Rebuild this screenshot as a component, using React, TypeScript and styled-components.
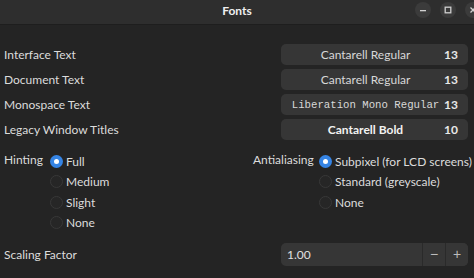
import React, { useState } from "react";
import styled, { createGlobalStyle } from "styled-components";

const GlobalStyle = createGlobalStyle`
  html, body {
    margin: 0;
    padding: 0;
    background: #242424;
  }
  body {
    font-family: Lato, "Noto Sans", sans-serif;
    color: #dededf;
  }
`;

const Window = styled.div`
  width: 474px;
  height: 278px;
  overflow: hidden;
  background: #242424;
`;

const HeaderBar = styled.div`
  position: relative;
  height: 24px;
  background: #2e2e2e;
  border-bottom: 1px solid #1e1e1e;
  display: flex;
  align-items: center;
  justify-content: center;
`;

const Title = styled.div`
  font-size: 12px;
  font-weight: 700;
  color: #f0f0f0;
  margin-top: -4px;
`;

const Controls = styled.div`
  position: absolute;
  top: 2px;
  left: 415px;
  display: flex;
  gap: 9px;
`;

const ControlButton = styled.div`
  width: 16px;
  height: 16px;
  border-radius: 50%;
  background: #3b3b3b;
  display: flex;
  align-items: center;
  justify-content: center;
  flex-shrink: 0;
`;

const Content = styled.div`
  padding: 19px 6px 0 4px;
`;

const FontRows = styled.div`
  display: flex;
  flex-direction: column;
  gap: 4px;
`;

const Row = styled.div`
  display: flex;
  align-items: center;
  justify-content: space-between;
  height: 21px;
`;

const Label = styled.div`
  font-size: 12px;
  color: #dcdcdc;
  white-space: nowrap;
`;

const FontButton = styled.button`
  width: 187px;
  height: 21px;
  border: none;
  border-radius: 5px;
  background: #363636;
  display: flex;
  align-items: center;
  padding: 0 10px 0 6px;
  font-family: Lato, "Noto Sans", sans-serif;
  color: #dcdcdc;
`;

const FontName = styled.span<{ mono?: boolean; bold?: boolean }>`
  flex: 1;
  text-align: center;
  font-family: ${({ mono }) =>
    mono ? `"Liberation Mono", monospace` : `Lato, "Noto Sans", sans-serif`};
  font-size: ${({ mono }) => (mono ? "10.7px" : "12px")};
  font-weight: ${({ bold }) => (bold ? 700 : 400)};
  white-space: nowrap;
  color: ${({ bold }) => (bold ? "#f2f2f2" : "#d8d8d8")};
`;

const FontSize = styled.span`
  font-size: 12px;
  font-weight: 700;
  width: 14px;
  text-align: right;
  color: #e8e8e8;
`;

const Options = styled.div`
  display: flex;
  margin-top: 11px;
`;

const OptionGroup = styled.div<{ width: number; labelWidth: number }>`
  display: grid;
  grid-template-columns: ${({ labelWidth }) => labelWidth}px 1fr;
  width: ${({ width }) => width}px;
  align-items: start;
`;

const GroupLabel = styled(Label)`
  margin-top: 1px;
`;

const RadioList = styled.div`
  display: flex;
  flex-direction: column;
  gap: 6.5px;
  padding-top: 3px;
`;

const RadioRow = styled.label`
  display: flex;
  align-items: center;
  gap: 3px;
  font-size: 12px;
  color: #dcdcdc;
  height: 14px;
  white-space: nowrap;
  cursor: pointer;
`;

const RadioDot = styled.span<{ checked: boolean }>`
  width: 13px;
  height: 13px;
  border-radius: 50%;
  box-sizing: border-box;
  flex-shrink: 0;
  background: ${({ checked }) => (checked ? "#3584e4" : "#262626")};
  border: ${({ checked }) => (checked ? "none" : "1.5px solid #383838")};
  display: flex;
  align-items: center;
  justify-content: center;
  &::after {
    content: "";
    display: ${({ checked }) => (checked ? "block" : "none")};
    width: 5px;
    height: 5px;
    border-radius: 50%;
    background: #ffffff;
  }
`;

const ScaleRow = styled(Row)`
  margin-top: 13px;
  height: 23px;
`;

const SpinBox = styled.div`
  width: 187px;
  height: 23px;
  border-radius: 5px;
  background: #363636;
  display: flex;
  align-items: stretch;
  overflow: hidden;
`;

const SpinValue = styled.div`
  flex: 1;
  display: flex;
  align-items: center;
  padding-left: 6px;
  font-size: 12px;
  color: #e0e0e0;
`;

const SpinButton = styled.button`
  width: 23px;
  border: none;
  border-left: 1px solid #2a2a2a;
  background: #363636;
  color: #bcbcbc;
  font-size: 14px;
  display: flex;
  align-items: center;
  justify-content: center;
  padding: 0;
`;

const RadioGroup: React.FC<{ items: string[]; initial: number }> = ({
  items,
  initial,
}) => {
  const [selected, setSelected] = useState(initial);
  return (
    <RadioList>
      {items.map((item, i) => (
        <RadioRow key={item} onClick={() => setSelected(i)}>
          <RadioDot checked={selected === i} />
          {item}
        </RadioRow>
      ))}
    </RadioList>
  );
};

const fonts = [
  { label: "Interface Text", name: "Cantarell Regular", size: 13 },
  { label: "Document Text", name: "Cantarell Regular", size: 13 },
  { label: "Monospace Text", name: "Liberation Mono Regular", size: 13, mono: true },
  { label: "Legacy Window Titles", name: "Cantarell Bold", size: 10, bold: true },
];

const App: React.FC = () => {
  return (
    <Window>
      <GlobalStyle />
      <HeaderBar>
        <Title>Fonts</Title>
        <Controls>
          <ControlButton>
            <svg width="8" height="8" viewBox="0 0 8 8">
              <rect x="1" y="4" width="6" height="1.3" fill="#d0d0d0" />
            </svg>
          </ControlButton>
          <ControlButton>
            <svg width="8" height="8" viewBox="0 0 8 8">
              <rect x="1.2" y="1.2" width="5.6" height="5.6" fill="none" stroke="#d0d0d0" strokeWidth="1.3" />
            </svg>
          </ControlButton>
          <ControlButton>
            <svg width="8" height="8" viewBox="0 0 8 8">
              <path d="M1.5 1.5 L6.5 6.5 M6.5 1.5 L1.5 6.5" stroke="#d0d0d0" strokeWidth="1.3" />
            </svg>
          </ControlButton>
        </Controls>
      </HeaderBar>
      <Content>
        <FontRows>
          {fonts.map((f) => (
            <Row key={f.label}>
              <Label>{f.label}</Label>
              <FontButton>
                <FontName mono={f.mono} bold={f.bold}>
                  {f.name}
                </FontName>
                <FontSize>{f.size}</FontSize>
              </FontButton>
            </Row>
          ))}
        </FontRows>
        <Options>
          <OptionGroup width={249} labelWidth={46}>
            <GroupLabel>Hinting</GroupLabel>
            <RadioGroup items={["Full", "Medium", "Slight", "None"]} initial={0} />
          </OptionGroup>
          <OptionGroup width={215} labelWidth={66}>
            <GroupLabel>Antialiasing</GroupLabel>
            <RadioGroup
              items={["Subpixel (for LCD screens)", "Standard (greyscale)", "None"]}
              initial={0}
            />
          </OptionGroup>
        </Options>
        <ScaleRow>
          <Label>Scaling Factor</Label>
          <SpinBox>
            <SpinValue>1.00</SpinValue>
            <SpinButton>−</SpinButton>
            <SpinButton>+</SpinButton>
          </SpinBox>
        </ScaleRow>
      </Content>
    </Window>
  );
};

export default App;
